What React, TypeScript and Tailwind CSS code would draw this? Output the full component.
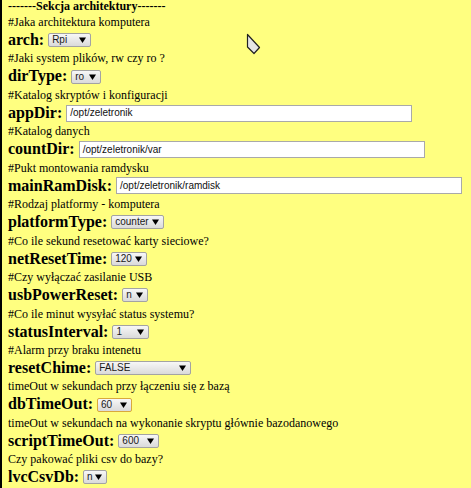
import React from "react";

type Row = {
  comment: string;
  label: string;
  select?: string;
  width?: string;
  input?: string;
  focused?: boolean;
};

const rows: Row[] = [
  { comment: "#Jaka architektura komputera", label: "arch:", select: "Rpi", width: "w-[43px]" },
  { comment: "#Jaki system plików, rw czy ro ?", label: "dirType:", select: "ro", width: "w-[30px]" },
  { comment: "#Katalog skryptów i konfiguracji", label: "appDir:", input: "/opt/zeletronik" },
  { comment: "#Katalog danych", label: "countDir:", input: "/opt/zeletronik/var" },
  { comment: "#Pukt montowania ramdysku", label: "mainRamDisk:", input: "/opt/zeletronik/ramdisk" },
  { comment: "#Rodzaj platformy - komputera", label: "platformType:", select: "counter", width: "w-[53px]" },
  { comment: "#Co ile sekund resetować karty sieciowe?", label: "netResetTime:", select: "120", width: "w-[36px]" },
  { comment: "#Czy wyłączać zasilanie USB", label: "usbPowerReset:", select: "n", width: "w-[26px]" },
  { comment: "#Co ile minut wysyłać status systemu?", label: "statusInterval:", select: "1", width: "w-[37px]" },
  { comment: "#Alarm przy braku intenetu", label: "resetChime:", select: "FALSE", width: "w-[96px]" },
  {
    comment: "timeOut w sekundach przy łączeniu się z bazą",
    label: "dbTimeOut:",
    select: "60",
    width: "w-[35px]",
    focused: true,
  },
  {
    comment: "timeOut w sekundach na wykonanie skryptu głównie bazodanowego",
    label: "scriptTimeOut:",
    select: "600",
    width: "w-[41px]",
  },
  { comment: "Czy pakować pliki csv do bazy?", label: "lvcCsvDb:", select: "n", width: "w-[24px]" },
];

function FakeSelect({ value, width, focused }: { value: string; width?: string; focused?: boolean }) {
  return (
    <div
      className={`${width} h-[14px] flex items-center justify-between rounded-[2px] border pl-[3px] pr-[4px] bg-gradient-to-b from-[#f7f7f7] to-[#dadada] font-['Liberation_Sans',Arial,sans-serif] text-[10px] leading-none text-[#1a1a1a] ${
        focused ? "border-[#d9a93c]" : "border-[#a3a3a3]"
      }`}
    >
      <span>{value}</span>
      <svg width="7" height="6" viewBox="0 0 7 6" className="shrink-0">
        <path d="M0 0.5 L7 0.5 L3.5 6 Z" fill="#000" />
      </svg>
    </div>
  );
}

function TextInput({ value }: { value: string }) {
  return (
    <div className="w-[346px] h-[17px] flex items-center border border-[#a9a9a9] bg-white pl-[3px] font-['Liberation_Sans',Arial,sans-serif] text-[10px] leading-none text-[#111]">
      {value}
    </div>
  );
}

export default function App() {
  return (
    <div className="relative min-h-screen w-full bg-[#ffff80] border-l-2 border-black pl-[6px] font-['Liberation_Serif','Times_New_Roman',serif] text-black">
      <div className="h-[14px] text-[12px] leading-[13px] font-bold">-------Sekcja architektury-------</div>

      {rows.map((row) => (
        <div key={row.label}>
          <div className="h-[16px] text-[12px] leading-[16px] whitespace-nowrap">{row.comment}</div>
          <div className="h-[20.44px] flex items-center gap-[4px]">
            <span className="text-[16px] leading-[20.44px] font-bold">{row.label}</span>
            {row.select && <FakeSelect value={row.select} width={row.width} focused={row.focused} />}
            {row.input && <TextInput value={row.input} />}
          </div>
        </div>
      ))}

      <svg width="15" height="22" viewBox="0 0 15 22" className="absolute left-[244px] top-[33px]">
        <path d="M1.5 1.5 L1.5 14 L8 20.5 L13.5 14.5 Z" fill="#e6e6e6" stroke="#222" strokeWidth="1.2" strokeLinejoin="round" />
      </svg>
    </div>
  );
}
